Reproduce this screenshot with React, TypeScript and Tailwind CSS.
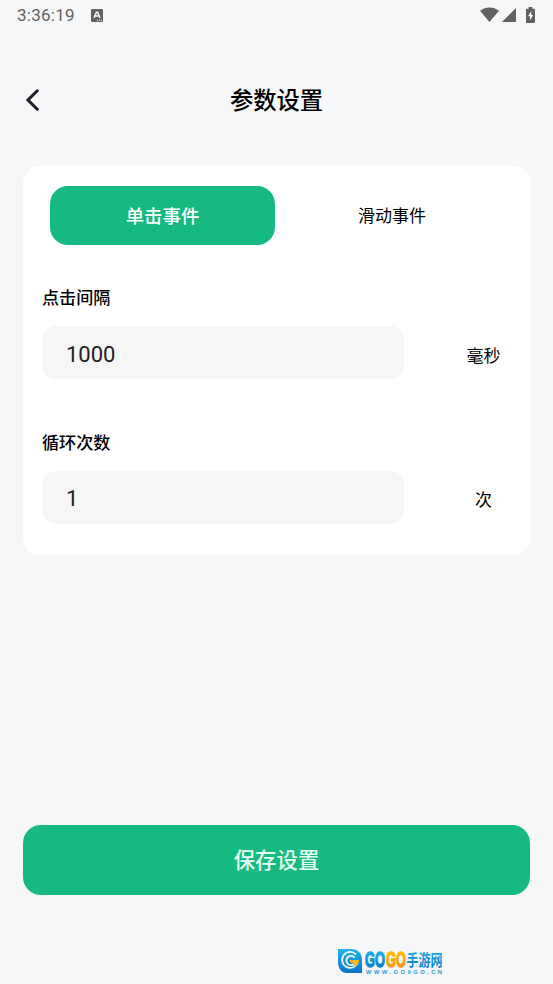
import { useState } from "react";
import clsx from "clsx";

const StatusBar = () => (
  <header className="flex h-[30px] shrink-0 items-center justify-between pl-[17px] pr-[17px] text-[#616264]">
    <div className="flex items-center">
      <span className="w-[74px] text-[17px] leading-[30px] tracking-[0.25px]">
        3:36:19
      </span>
      <svg width="12" height="13" viewBox="0 0 12 13">
        <rect width="12" height="13" rx="1.2" fill="currentColor" />
        <path
          d="M3 9 L5.4 3.2 H6.6 L9 9 M4 7.1 H8"
          fill="none"
          stroke="#f5f7f9"
          strokeWidth="1.5"
        />
        <path d="M6 11.3 H11" stroke="#f5f7f9" strokeDasharray="1.2 0.8" />
      </svg>
    </div>
    <svg width="56" height="16" viewBox="0 0 56 16" fill="currentColor">
      <path d="M0 3.8 C5.5 -0.7 13.5 -0.7 19 3.8 L9.5 15 Z" />
      <path d="M36 1 V15 H22 Z" />
      <path d="M48.6 0 h3.8 v1.7 h1.3 q1.3 0 1.3 1.3 v11.7 q0 1.3 -1.3 1.3 h-6.4 q-1.3 0 -1.3 -1.3 v-11.7 q0 -1.3 1.3 -1.3 h1.3 Z" />
      <path d="M51.3 4 L48 9.3 H50 V13.3 L53.3 8 H51.3 Z" fill="#f5f7f9" />
    </svg>
  </header>
);

type FieldProps = {
  label: string;
  unit: string;
  value: string;
  onChange: (value: string) => void;
};

const Field = ({ label, unit, value, onChange }: FieldProps) => (
  <section className="pl-[19px]">
    <label className="block h-[26px] pt-px text-[17.1px] font-medium leading-[26px]">
      {label}
    </label>
    <div className="mt-4 flex h-[53px] items-center">
      <input
        className="h-full w-[362px] rounded-[14px] bg-[#f6f6f6] pb-0 pl-6 pt-[3px] text-[22px] text-[#212121] outline-none"
        value={value}
        onChange={(e) => onChange(e.target.value)}
      />
      <span className="flex-1 pl-[33px] pt-[8px] text-center text-[17px]">
        {unit}
      </span>
    </div>
  </section>
);

const SiteLogo = () => (
  <svg
    className="overflow-visible"
    width="108"
    height="30"
    viewBox="0 0 108 30"
  >
    <defs>
      <linearGradient id="blue" x1="0" y1="0" x2="0" y2="1">
        <stop offset="0" stopColor="#23b5ee" />
        <stop offset="1" stopColor="#0872c6" />
      </linearGradient>
      <linearGradient id="orange" x1="0" y1="0" x2="0" y2="1">
        <stop offset="0" stopColor="#ffc400" />
        <stop offset="1" stopColor="#f78a10" />
      </linearGradient>
    </defs>
    <path
      d="M1 3 H14 C21 3 25 7 25 14 V27 H10 C4 27 1 22 1 16 Z"
      fill="url(#blue)"
    />
    <path
      d="M19 8.5 A8 8 0 1 0 20.5 17"
      fill="none"
      stroke="#eefaff"
      strokeWidth="1.8"
    />
    <path
      d="M17.5 11.5 A4.6 4.6 0 1 0 17 18"
      fill="none"
      stroke="#eefaff"
      strokeWidth="2"
    />
    <path d="M12.5 14 H22 C22 17.5 20.5 19.5 18 21 L17 17 H14 Z" fill="#ffb515" />
    <g
      fontFamily="'Liberation Sans', sans-serif"
      fontWeight="700"
      fontSize="21.5"
      strokeWidth="1.3"
    >
      <text x="28" y="21" textLength="20" lengthAdjust="spacingAndGlyphs" fill="url(#blue)" stroke="url(#blue)">
        GO
      </text>
      <text x="49" y="21" textLength="20" lengthAdjust="spacingAndGlyphs" fill="url(#orange)" stroke="url(#orange)">
        GO
      </text>
    </g>
    <text
      x="69.5"
      y="20"
      textLength="36"
      lengthAdjust="spacingAndGlyphs"
      fontFamily="'Noto Sans CJK SC', sans-serif"
      fontWeight="700"
      fontSize="16"
      fill="url(#blue)"
    >
      手游网
    </text>
    <text
      x="29"
      y="27.8"
      textLength="76"
      fontFamily="'Liberation Sans', sans-serif"
      fontWeight="700"
      fontSize="5.8"
      fill="#2a9ad6"
    >
      WWW.GO9GO.CN
    </text>
  </svg>
);

const tabs = ["单击事件", "滑动事件"];

const App = () => {
  const [tab, setTab] = useState(0);
  const [interval, setInterval] = useState("1000");
  const [count, setCount] = useState("1");

  return (
    <div className="flex h-[984px] w-[553px] flex-col overflow-hidden bg-[#f5f7f9] font-['Roboto','Noto_Sans_CJK_SC',sans-serif] text-black">
      <StatusBar />
      <nav className="mt-[45px] flex h-[50px] shrink-0 items-center">
        <button className="w-[65px] pl-[26px]">
          <svg width="14" height="22" viewBox="0 0 14 22" fill="none">
            <path
              d="M11.3 1.8 L2 11 L11.3 20.2"
              stroke="#202124"
              strokeWidth="3"
              strokeLinecap="round"
            />
          </svg>
        </button>
        <h1 className="flex-1 pr-[65px] pt-[3px] text-center text-[23.3px] font-medium">
          参数设置
        </h1>
      </nav>

      <main className="mx-[23px] mt-[41px] h-[389px] shrink-0 rounded-[16px] bg-white pt-5">
        <div className="mb-[39px] ml-[27px] flex h-[59px] gap-1">
          {tabs.map((name, i) => (
            <button
              key={name}
              onClick={() => setTab(i)}
              className={clsx(
                "w-[225px] rounded-[18px] pt-[2px]",
                tab === i
                  ? "bg-[#16ba80] text-[18.4px] font-medium text-white"
                  : "pl-px text-[17px]"
              )}
            >
              {name}
            </button>
          ))}
        </div>
        <Field
          label="点击间隔"
          unit="毫秒"
          value={interval}
          onChange={setInterval}
        />
        <div className="h-[49.5px]" />
        <Field label="循环次数" unit="次" value={count} onChange={setCount} />
      </main>

      <button className="mx-[23px] mt-[270px] h-[70px] shrink-0 rounded-[18px] bg-[#16ba80] pt-[3px] text-[21.4px] font-medium text-[#e3fbf1]">
        保存设置
      </button>

      <footer className="mt-[51px] pl-[337px]">
        <SiteLogo />
      </footer>
    </div>
  );
};

export default App;
